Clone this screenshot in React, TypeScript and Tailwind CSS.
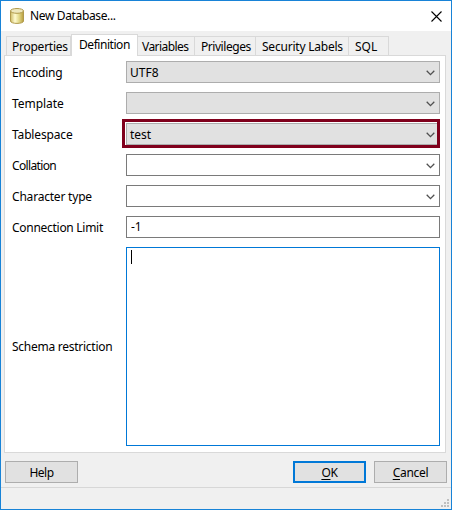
import React from "react";

function Chevron() {
  return (
    <svg className="mt-[2px] h-[6px] w-[9px] shrink-0" viewBox="0 0 9 6" fill="none">
      <path d="M0.7 0.8L4.5 4.6L8.3 0.8" stroke="#505050" strokeWidth="1.3" />
    </svg>
  );
}

type FieldProps = { label: string; track: string; value?: string; kind: "select" | "combo" | "text"; marked?: boolean };

function Field({ label, track, value, kind, marked }: FieldProps) {
  const look = kind === "select" ? "border-[#adadad] bg-[#e1e1e1]" : "border-[#7a7a7a] bg-white";
  return (
    <div className="flex h-[22px] items-center">
      <label className={`w-[114px] shrink-0 pt-[2px] ${track}`}>{label}</label>
      <div className={`relative flex h-[22px] w-[314px] items-center justify-between border pr-[4px] pl-[3px] ${look}`}>
        <span className={kind === "text" ? "pl-px" : "pt-[2px]"}>{value}</span>
        {kind !== "text" && <Chevron />}
        {marked && <div className="absolute -top-[5px] -left-[5px] h-[29px] w-[318px] border-3 border-[#80001c]"><div className="h-full border-t border-l border-white" /></div>}
      </div>
    </div>
  );
}

function Tab({ label, className }: { label: string; className: string }) {
  return <div className={`h-[19px] border-t border-r border-[#d9d9d9] leading-[20px] ${className}`}>{label}</div>;
}

export default function App() {
  return (
    <div className="flex h-[510px] w-[452px] flex-col overflow-hidden border border-[#1883d7] bg-[#f0f0f0] font-['Noto_Sans',sans-serif] text-[12px] leading-[16px] whitespace-nowrap text-black">
      <header className="flex h-[30px] shrink-0 items-center bg-white pr-[9px] pl-[8px]">
        <svg className="h-[18px] w-[16px]" viewBox="0 0 16 18">
          <defs>
            <linearGradient id="cyl">
              <stop offset="0" stopColor="#cdbb65" />
              <stop offset=".35" stopColor="#fffbd0" />
              <stop offset=".65" stopColor="#e3da8c" />
              <stop offset="1" stopColor="#b79c3b" />
            </linearGradient>
          </defs>
          <path d="M1.5 4V14C1.5 17.2 14.5 17.2 14.5 14V4Z" fill="url(#cyl)" stroke="#b09a4c" />
          <ellipse cx="8" cy="3.9" rx="6.5" ry="2.4" fill="#eee8bd" stroke="#b09a4c" />
        </svg>
        <h1 className="ml-[5px] flex-1 tracking-[-0.36px]">New Database...</h1>
        <svg className="h-[11px] w-[11px]" viewBox="0 0 11 11" fill="none">
          <path d="M.5 .5L10.5 10.5M10.5 .5L.5 10.5" stroke="black" strokeWidth="1.1" />
        </svg>
      </header>
      <nav className="ml-[5px] flex h-[24px] shrink-0 items-end">
        <Tab label="Properties" className="w-[65px] border-l pl-[5px] tracking-[-0.25px]" />
        <div className="relative z-10 -mb-px h-[22px] w-[67px] border border-b-0 border-[#d9d9d9] bg-white pl-[7px] leading-[19px] tracking-[-0.45px]">Definition</div>
        <Tab label="Variables" className="w-[57px] pl-[4px] tracking-[-0.55px]" />
        <Tab label="Privileges" className="w-[61px] pl-[6px] tracking-[-0.45px]" />
        <Tab label="Security Labels" className="w-[93px] pl-[6px] tracking-[-0.22px]" />
        <Tab label="SQL" className="w-[40px] pl-[6px]" />
      </nav>
      <main className="ml-[3px] flex h-[398px] w-[442px] shrink-0 flex-col gap-[9px] border border-[#d9d9d9] bg-white pt-[5px] pl-[7px]">
        <Field label="Encoding" track="tracking-[-0.25px]" value="UTF8" kind="select" />
        <Field label="Template" track="tracking-[-0.05px]" kind="select" />
        <Field label="Tablespace" track="tracking-[-0.15px]" value="test" kind="select" marked />
        <Field label="Collation" track="tracking-[-0.65px]" kind="combo" />
        <Field label="Character type" track="tracking-[-0.2px]" kind="combo" />
        <Field label="Connection Limit" track="tracking-[-0.28px]" value="-1" kind="text" />
        <div className="flex h-[199px] items-center">
          <label className="w-[114px] shrink-0 tracking-[-0.26px]">Schema restriction</label>
          <div className="h-[199px] w-[314px] border border-[#0078d7] pt-[2px] pl-[4px]">
            <div className="h-[14px] w-px bg-black" />
          </div>
        </div>
      </main>
      <footer className="mt-[8px] flex h-[22px] shrink-0 pl-[4px] text-center leading-[22px]">
        <button className="w-[73px] border border-[#adadad] bg-[#e1e1e1] tracking-[-0.5px]">Help</button>
        <button className="ml-[215px] w-[73px] border-2 border-[#0078d7] bg-[#e1e1e1] leading-[20px] tracking-[-0.3px]"><span className="underline underline-offset-2">O</span>K</button>
        <button className="ml-[8px] w-[73px] border border-[#adadad] bg-[#e1e1e1] tracking-[-0.3px]"><span className="underline underline-offset-2">C</span>ancel</button>
      </footer>
      <div className="mt-[4px] flex flex-1 items-end justify-end border-t border-[#d7d7d7] pr-[2px] pb-[2px]">
        <svg className="h-[8px] w-[8px]" viewBox="0 0 8 8" fill="#bfbfbf">
          <path d="M6 0h2v2h-2zM3 3h2v2h-2zM6 3h2v2h-2zM0 6h2v2h-2zM3 6h2v2h-2zM6 6h2v2h-2z" />
        </svg>
      </div>
    </div>
  );
}
